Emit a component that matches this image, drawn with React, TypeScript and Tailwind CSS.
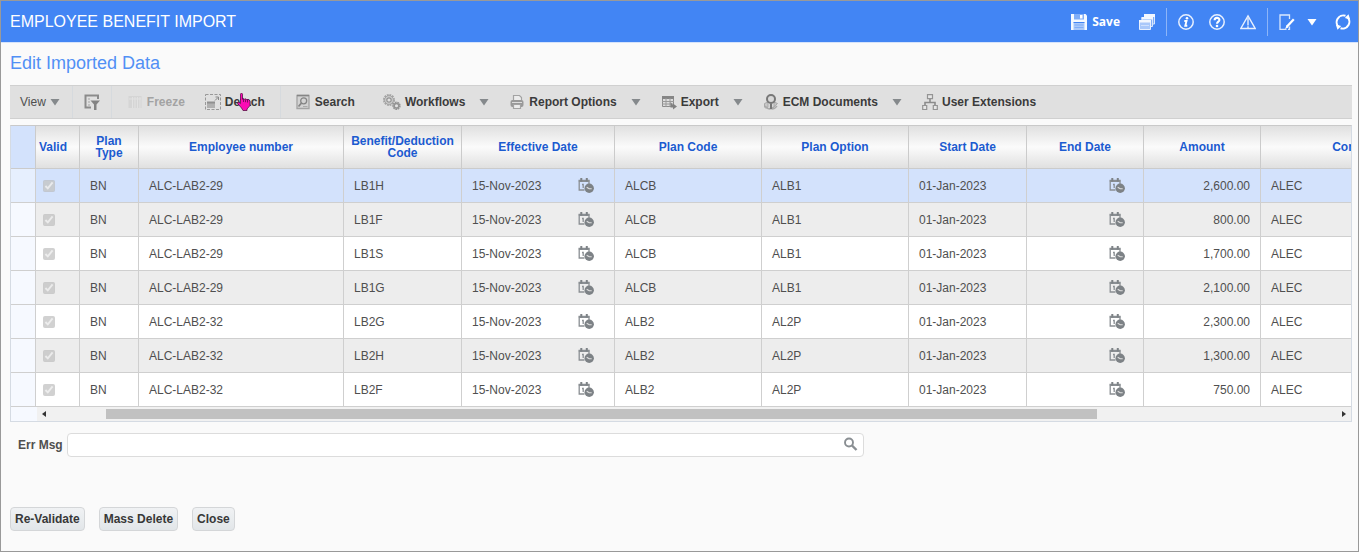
import React, { useState } from 'react';

interface BenefitRow {
  id: number;
  planType: string;
  employee: string;
  code: string;
  effectiveDate: string;
  planCode: string;
  planOption: string;
  startDate: string;
  amount: string;
  company: string;
}

const rows: BenefitRow[] = [
  { id: 1, planType: 'BN', employee: 'ALC-LAB2-29', code: 'LB1H', effectiveDate: '15-Nov-2023', planCode: 'ALCB', planOption: 'ALB1', startDate: '01-Jan-2023', amount: '2,600.00', company: 'ALEC' },
  { id: 2, planType: 'BN', employee: 'ALC-LAB2-29', code: 'LB1F', effectiveDate: '15-Nov-2023', planCode: 'ALCB', planOption: 'ALB1', startDate: '01-Jan-2023', amount: '800.00', company: 'ALEC' },
  { id: 3, planType: 'BN', employee: 'ALC-LAB2-29', code: 'LB1S', effectiveDate: '15-Nov-2023', planCode: 'ALCB', planOption: 'ALB1', startDate: '01-Jan-2023', amount: '1,700.00', company: 'ALEC' },
  { id: 4, planType: 'BN', employee: 'ALC-LAB2-29', code: 'LB1G', effectiveDate: '15-Nov-2023', planCode: 'ALCB', planOption: 'ALB1', startDate: '01-Jan-2023', amount: '2,100.00', company: 'ALEC' },
  { id: 5, planType: 'BN', employee: 'ALC-LAB2-32', code: 'LB2G', effectiveDate: '15-Nov-2023', planCode: 'ALB2', planOption: 'AL2P', startDate: '01-Jan-2023', amount: '2,300.00', company: 'ALEC' },
  { id: 6, planType: 'BN', employee: 'ALC-LAB2-32', code: 'LB2H', effectiveDate: '15-Nov-2023', planCode: 'ALB2', planOption: 'AL2P', startDate: '01-Jan-2023', amount: '1,300.00', company: 'ALEC' },
  { id: 7, planType: 'BN', employee: 'ALC-LAB2-32', code: 'LB2F', effectiveDate: '15-Nov-2023', planCode: 'ALB2', planOption: 'AL2P', startDate: '01-Jan-2023', amount: '750.00', company: 'ALEC' },
];

const columns = [
  { label: 'Valid', width: 'w-[44px]' },
  { label: 'Plan Type', width: 'w-[59px]' },
  { label: 'Employee number', width: 'w-[205px]' },
  { label: 'Benefit/Deduction Code', width: 'w-[118px]' },
  { label: 'Effective Date', width: 'w-[153px]' },
  { label: 'Plan Code', width: 'w-[147px]' },
  { label: 'Plan Option', width: 'w-[147px]' },
  { label: 'Start Date', width: 'w-[118px]' },
  { label: 'End Date', width: 'w-[117px]' },
  { label: 'Amount', width: 'w-[117px]' },
  { label: 'Company', width: 'w-[198px]' },
];

function Icon({ children }: { children: React.ReactNode }) {
  return (
    <svg viewBox="0 0 16 16" className="size-4 shrink-0" fill="none" aria-hidden="true">
      {children}
    </svg>
  );
}

/* Header icons */

const SaveIcon = () => (
  <Icon>
    <path d="M0 0h14.500L16 1.500V16H0z" fill="#fff" fillOpacity=".95" />
    <path d="M3 0h10v5.500H3z" fill="#7fadf8" />
    <path d="M9 1h2.500v3.500H9z" fill="#fff" />
    <path d="M2.500 8.500h11V16h-11z" fill="#a9c8fa" />
    <path d="M2.500 8.500h11" stroke="#4285f4" />
    <path d="M3.500 11h9M3.500 13.500h9" stroke="#7fadf8" />
  </Icon>
);

const WindowsIcon = () => (
  <Icon>
    <path d="M5.500.5h10v9.500h-10z" fill="#7fadf8" stroke="#d9e7fd" />
    <path d="M5 0h11v3H5z" fill="#f2f7ff" />
    <path d="M3 3.500h10.500v9H3z" fill="#7fadf8" stroke="#d9e7fd" />
    <path d="M2.500 3h11.500v2.500H2.500z" fill="#f2f7ff" />
    <path d="M.5 6.500h11v9H.5z" fill="#a9c8fa" stroke="#e8f0fe" />
    <path d="M0 6h12v2.500H0z" fill="#f2f7ff" />
    <path d="M2 11.500h8" stroke="#cfe0fd" />
  </Icon>
);

const InfoIcon = () => (
  <Icon>
    <circle cx="8" cy="8" r="7.200" stroke="#e8f0fe" strokeWidth="1.500" />
    <circle cx="9" cy="4.300" r="1.300" fill="#fff" />
    <path d="M6.300 7h2.200l-1.200 4.700h2" stroke="#fff" strokeWidth="1.900" />
  </Icon>
);

const HelpIcon = () => (
  <Icon>
    <circle cx="8" cy="8" r="7.200" stroke="#e8f0fe" strokeWidth="1.500" />
    <path d="M5.600 6.200c0-3 4.800-3 4.800-.3C10.400 7.600 8 7.700 8 9.700" stroke="#fff" strokeWidth="2.100" />
    <circle cx="8" cy="12" r="1.300" fill="#fff" />
  </Icon>
);

const WarningIcon = () => (
  <Icon>
    <path d="M8 1.800 15.200 14.500H.8z" stroke="#e8f0fe" strokeWidth="1.400" />
    <path d="M8 4v7.500M8 12.300v1.700" stroke="#e8f0fe" strokeWidth="1.400" />
  </Icon>
);

const EditPageIcon = () => (
  <Icon>
    <path d="M10.500 5V1H1v14.300h6.500M10.500 12.500v2.800H9" stroke="#d9e7fd" strokeWidth="1.300" />
    <path d="m14.800 5.200-7 7.500" stroke="#fff" strokeWidth="2.300" />
    <path d="m7.600 11.200-1.500 3.700 3.500-1.600z" fill="#fff" />
  </Icon>
);

const RefreshIcon = () => (
  <Icon>
    <path d="M4.200 13.400A6.700 6.700 0 0 1 10.500 1.800M11.800 2.600A6.700 6.700 0 0 1 5.500 14.200" stroke="#fff" strokeWidth="2" />
    <path d="M.8 10.500 6.200 12 2.500 15.800z" fill="#fff" />
    <path d="M15.200 5.500 9.800 4l3.700-3.800z" fill="#fff" />
  </Icon>
);

/* Toolbar icons */

const FilterIcon = () => (
  <Icon>
    <path d="M14 5V1.500H1.500v12H7" stroke="#8b8b8b" strokeWidth="2" />
    <path d="M4 5h2M4 8h2M4 11h2" stroke="#a5a5a5" />
    <path d="M6.500 6.500H16l-3.500 4V16H10v-5.500z" fill="#838383" />
  </Icon>
);

const FreezeIcon = () => (
  <Icon>
    <path d="M1.500 2h13v12h-13z" fill="#d5d5d5" />
    <path d="M5.500 3v11M8 3v11M10.500 3v11M13 3v11M2 5h12" stroke="#e2e2e2" />
  </Icon>
);

const DetachIcon = () => (
  <Icon>
    <path d="M.5.500h15v15H.5z" stroke="#999" strokeDasharray="3 1.500" />
    <path d="M2 8h8v6H2z" fill="#b0b0b0" />
    <path d="M2 7.500h8v2H2z" fill="#909090" />
    <path d="M10 6.500l3-3M10.500 3H13.500v3" stroke="#888" />
  </Icon>
);

const SearchPageIcon = () => (
  <Icon>
    <path d="M2 1.500h12v13H2z" fill="#d3d3d3" stroke="#a3a3a3" strokeWidth="1.300" />
    <path d="M2 1.500h12" stroke="#858585" strokeWidth="1.500" />
    <circle cx="8.700" cy="6.800" r="3" stroke="#858585" strokeWidth="1.300" />
    <path d="m6.500 9-3 3.500" stroke="#858585" strokeWidth="1.800" />
    <path d="M8 12.500h4.500" stroke="#aaa" />
  </Icon>
);

const GearsIcon = () => (
  <svg viewBox="0 0 18 16" className="h-4 w-[18px] shrink-0" fill="none" aria-hidden="true">
    <circle cx="6" cy="6" r="5" stroke="#a3a3a3" strokeWidth="2" strokeDasharray="1.800 .8" />
    <circle cx="6" cy="6" r="4.300" fill="#d3d3d3" stroke="#a3a3a3" />
    <circle cx="6" cy="6" r="2.200" fill="#e2e2e2" stroke="#949494" strokeWidth="1.200" />
    <circle cx="13.500" cy="11.800" r="3.200" stroke="#949494" strokeWidth="2" strokeDasharray="1.600 .6" />
    <circle cx="13.500" cy="11.800" r="2.300" fill="#e2e2e2" stroke="#949494" strokeWidth="1.500" />
  </svg>
);

const PrinterIcon = () => (
  <Icon>
    <path d="M4.500 6V1.500h6l2 2V6" fill="#ececec" stroke="#a3a3a3" strokeWidth="1.200" />
    <rect x="1.500" y="6" width="13" height="7" rx="2" fill="#999" />
    <path d="M3 8.500h10" stroke="#ddd" />
    <path d="M4.500 10.500h7v4h-7z" fill="#ececec" stroke="#a3a3a3" strokeWidth="1.200" />
  </Icon>
);

const ExportIcon = () => (
  <Icon>
    <path d="M1.500 2.500h11v10h-11z" fill="#ddd" stroke="#8b8b8b" />
    <path d="M1 2h12v3H1z" fill="#858585" />
    <path d="M5 4v9M9 4v9M1 7.500h12M1 10h12" stroke="#999" />
    <path d="M9.500 8v5.500H12v2l4-3-4-3v1.500z" fill="#808080" />
  </Icon>
);

const EcmIcon = () => (
  <Icon>
    <path d="M1.500 9.500 5 8v5l-2 1.200-1.500-1zM14.500 9.500 11 8v5l-2 1.200 1.500-1z" fill="#c8c8c8" stroke="#a8a8a8" />
    <path d="M2 12c2 2.500 4 3.500 6 2.500 2 1 4 0 6-2.500" stroke="#aaa" strokeWidth="1.500" />
    <circle cx="8" cy="5" r="4" fill="#d8d8d8" stroke="#777" strokeWidth="2" />
    <path d="M8 9.500V15" stroke="#777" strokeWidth="2.200" />
  </Icon>
);

const OrgIcon = () => (
  <Icon>
    <path d="M5.500.700h5v4h-5z" fill="#e6e6e6" stroke="#949494" strokeWidth="1.200" />
    <path d="M8 5v3.500M3 11.500v-3h10v3" stroke="#8b8b8b" strokeWidth="1.600" />
    <path d="M.700 11.500h4v4h-4zM11.300 11.500h4v4h-4z" fill="#e6e6e6" stroke="#949494" strokeWidth="1.200" />
  </Icon>
);

const CalendarIcon = () => (
  <Icon>
    <path d="M6.500 12H1.200V2.500H11V6" stroke="#8a8f93" strokeWidth="1.300" />
    <path d="M.8 2h10.500v2H.8z" fill="#8a8f93" />
    <path d="M3.300 0v3.500M8.800 0v3.500" stroke="#7d8286" strokeWidth="2" />
    <path d="M4 6.500h1.200V10" stroke="#8a8f93" strokeWidth="1.300" />
    <circle cx="11.200" cy="10.300" r="4.700" fill="#7d8286" />
    <path d="m8.700 9.200 2.500 1.500h2.500" stroke="#e0e0e0" strokeWidth="1.100" />
  </Icon>
);

const Caret = () => (
  <svg viewBox="0 0 10 8" className="h-2 w-2.5 shrink-0" aria-hidden="true">
    <path d="M.5 1h9L5 7.500z" fill="#85898c" />
  </svg>
);

const PointerHand = () => (
  <svg viewBox="0 0 14 18" className="pointer-events-none absolute -top-px left-8 z-10 h-[18px] w-3.5" aria-hidden="true">
    <path
      d="M3.500 1.200c0-1.200 2-1.200 2 0v5l1-.7 1.200.8 1.300-.5 1 1 1.500-.3 1.500 1.500v4.500l-3 3.500v1.500H6L4.500 15 .8 10.700c-.8-1 .5-2 1.500-1.200l1.200 1z"
      fill="#fb0bb4"
      stroke="#5c1048"
      strokeWidth=".8"
    />
    <path d="M6.500 6v3M8.500 6.500v2.700M10.500 7v2.500" stroke="#5c1048" strokeWidth=".8" />
  </svg>
);

function ToolButton({ icon, label, disabled, children }: { icon: React.ReactNode; label: string; disabled?: boolean; children?: React.ReactNode }) {
  return (
    <button type="button" disabled={disabled} className="relative flex items-center gap-1 font-bold whitespace-nowrap text-[#3b3b3b] disabled:text-[#a3a3a3]">
      {icon}
      {label}
      {children}
    </button>
  );
}

function MenuButton({ icon, label }: { icon: React.ReactNode; label: string }) {
  return (
    <div className="flex items-center gap-3.5">
      <ToolButton icon={icon} label={label} />
      <button type="button" aria-label={`${label} menu`} className="flex">
        <Caret />
      </button>
    </div>
  );
}

function HeaderButton({ label, children }: { label: string; children: React.ReactNode }) {
  return (
    <button type="button" aria-label={label} className="flex">
      {children}
    </button>
  );
}

const FooterButton = ({ label }: { label: string }) => (
  <button type="button" className="h-6 rounded border border-[#d4d6d8] bg-linear-to-b from-[#f0f2f4] to-[#e2e6e9] px-1 font-bold text-[#383838]">
    {label}
  </button>
);

export default function App() {
  const [selected, setSelected] = useState(1);
  const [errMsg, setErrMsg] = useState('');

  const rowColor = (row: BenefitRow, index: number) => {
    if (row.id === selected) return 'bg-[#d3e2fc]';
    return index % 2 ? 'bg-[#ededed]' : 'bg-white';
  };

  return (
    <div className="min-h-screen border border-[#999] bg-[#fafafa] font-['Liberation_Sans',Arial,sans-serif] text-xs text-[#4f4f4f]">
      <header className="flex h-[42px] items-center justify-between border-b border-[#d5e3fb] bg-[#4285f4] pr-[7px] pl-[9px] text-white">
        <h1 className="text-base">EMPLOYEE BENEFIT IMPORT</h1>
        <div className="flex items-center gap-[15px]">
          <button type="button" className="mr-1 flex items-center gap-[5px] font-['Open_Sans',sans-serif] font-bold">
            <SaveIcon />
            Save
          </button>
          <HeaderButton label="Windows"><WindowsIcon /></HeaderButton>
          <div className="-mx-1 h-7 w-px bg-[#8db5f8]" />
          <HeaderButton label="Information"><InfoIcon /></HeaderButton>
          <HeaderButton label="Help"><HelpIcon /></HeaderButton>
          <HeaderButton label="Warnings"><WarningIcon /></HeaderButton>
          <div className="-mx-1 h-7 w-px bg-[#8db5f8]" />
          <div className="mr-[3px] flex items-center gap-3">
            <HeaderButton label="Edit page"><EditPageIcon /></HeaderButton>
            <HeaderButton label="Edit menu">
              <svg viewBox="0 0 10 8" className="h-2 w-2.5" aria-hidden="true">
                <path d="M.5 1h9L5 7.500z" fill="#fff" />
              </svg>
            </HeaderButton>
          </div>
          <HeaderButton label="Refresh"><RefreshIcon /></HeaderButton>
        </div>
      </header>

      <main className="pr-1.5 pl-[9px]">
        <h2 className="pt-1.5 text-lg text-[#5190f5]">Edit Imported Data</h2>

        <div className="mt-2 flex h-[34px] items-center border-y border-[#d0d0d0] bg-[#e0e0e0] pl-2.5">
          <button type="button" className="flex items-center gap-1">
            View
            <Caret />
          </button>
          <div className="ml-3 h-8 w-px bg-[#d6dade]" />
          <button type="button" aria-label="Filter" className="mx-[11px] flex">
            <FilterIcon />
          </button>
          <div className="h-8 w-px bg-[#d6dade]" />
          <div className="flex items-center gap-5 px-[15px]">
            <ToolButton icon={<FreezeIcon />} label="Freeze" disabled />
            <ToolButton icon={<DetachIcon />} label="Detach">
              <PointerHand />
            </ToolButton>
          </div>
          <div className="h-8 w-px bg-[#d6dade]" />
          <div className="flex items-center gap-7 pl-3.5">
            <ToolButton icon={<SearchPageIcon />} label="Search" />
            <div className="flex items-center gap-5">
              <MenuButton icon={<GearsIcon />} label="Workflows" />
              <MenuButton icon={<PrinterIcon />} label="Report Options" />
              <MenuButton icon={<ExportIcon />} label="Export" />
              <MenuButton icon={<EcmIcon />} label="ECM Documents" />
              <ToolButton icon={<OrgIcon />} label="User Extensions" />
            </div>
          </div>
        </div>

        <div className="mt-1.5 border border-[#d5dbe3] border-t-[#c9c9c9]">
          <div className="overflow-hidden">
            <table className="w-[1448px] table-fixed border-separate border-spacing-0">
              <thead>
                <tr className="h-[43px]">
                  <td className="w-[25px] border-r border-b border-[#cbcbcb] bg-[#d3e2fc]" />
                  {columns.map(col => (
                    <th
                      key={col.label}
                      scope="col"
                      className={`${col.width} border-r border-b border-[#cbcbcb] bg-linear-to-b from-[#e0e0e0] via-[#fbfbfb] to-[#e0e0e0] px-1 leading-3 font-bold text-[#1c5bd0] first-of-type:pl-[3px] first-of-type:text-left`}
                    >
                      {col.label}
                    </th>
                  ))}
                </tr>
              </thead>
              <tbody>
                {rows.map((row, index) => (
                  <tr
                    key={row.id}
                    onClick={() => setSelected(row.id)}
                    className={`h-[34px] *:border-r *:border-b *:border-[#cfcfcf] *:px-2.5 ${rowColor(row, index)}`}
                  >
                    <td className={row.id === selected ? 'bg-[#e6effe]' : 'bg-[#f6f9ff]'} />
                    <td>
                      <div className="-ml-[3px] flex">
                        <input type="checkbox" aria-label={`Row ${row.id} valid`} checked disabled readOnly className="size-3" />
                      </div>
                    </td>
                    <td>{row.planType}</td>
                    <td>{row.employee}</td>
                    <td>{row.code}</td>
                    <td>
                      <div className="flex items-center justify-between pr-2.5">
                        {row.effectiveDate}
                        <button type="button" aria-label="Pick effective date" className="flex">
                          <CalendarIcon />
                        </button>
                      </div>
                    </td>
                    <td>{row.planCode}</td>
                    <td>{row.planOption}</td>
                    <td>{row.startDate}</td>
                    <td>
                      <div className="flex justify-end pr-2">
                        <button type="button" aria-label="Pick end date" className="flex">
                          <CalendarIcon />
                        </button>
                      </div>
                    </td>
                    <td className="text-right">{row.amount}</td>
                    <td>{row.company}</td>
                  </tr>
                ))}
              </tbody>
            </table>
          </div>

          <div className="flex h-3.5">
            <div className="w-[26px] bg-[#f6f9ff]" />
            <div className="flex flex-1 items-center gap-1 bg-[#f1f1f1] px-1">
              <button type="button" aria-label="Scroll left">
                <svg viewBox="0 0 6 6" className="size-1.5" aria-hidden="true">
                  <path d="M5 0v6L1 3z" fill="#333" />
                </svg>
              </button>
              <div className="h-2.5 flex-1">
                <div className="ml-[4.3%] h-full w-[77%] bg-[#c1c1c1]" />
              </div>
              <button type="button" aria-label="Scroll right">
                <svg viewBox="0 0 6 6" className="size-1.5" aria-hidden="true">
                  <path d="M1 0v6l4-3z" fill="#333" />
                </svg>
              </button>
            </div>
          </div>
        </div>

        <div className="mt-[11px] flex items-center gap-1 pl-2">
          <label htmlFor="errMsg" className="font-bold whitespace-nowrap">Err Msg</label>
          <div className="flex h-6 w-full max-w-[797px] items-center rounded border border-[#dcdcdc] bg-white pr-1">
            <input
              id="errMsg"
              type="text"
              value={errMsg}
              onChange={e => setErrMsg(e.target.value)}
              className="h-full min-w-0 flex-1 px-1.5 outline-none"
            />
            <button type="button" aria-label="Search message" className="flex">
              <Icon>
                <circle cx="6" cy="5.500" r="4" stroke="#8a8f93" strokeWidth="1.900" />
                <path d="m9 8.500 4.500 4.500" stroke="#8a8f93" strokeWidth="2.400" />
              </Icon>
            </button>
          </div>
        </div>

        <div className="mt-[50px] flex gap-3.5 pb-3">
          <FooterButton label="Re-Validate" />
          <FooterButton label="Mass Delete" />
          <FooterButton label="Close" />
        </div>
      </main>
    </div>
  );
}
